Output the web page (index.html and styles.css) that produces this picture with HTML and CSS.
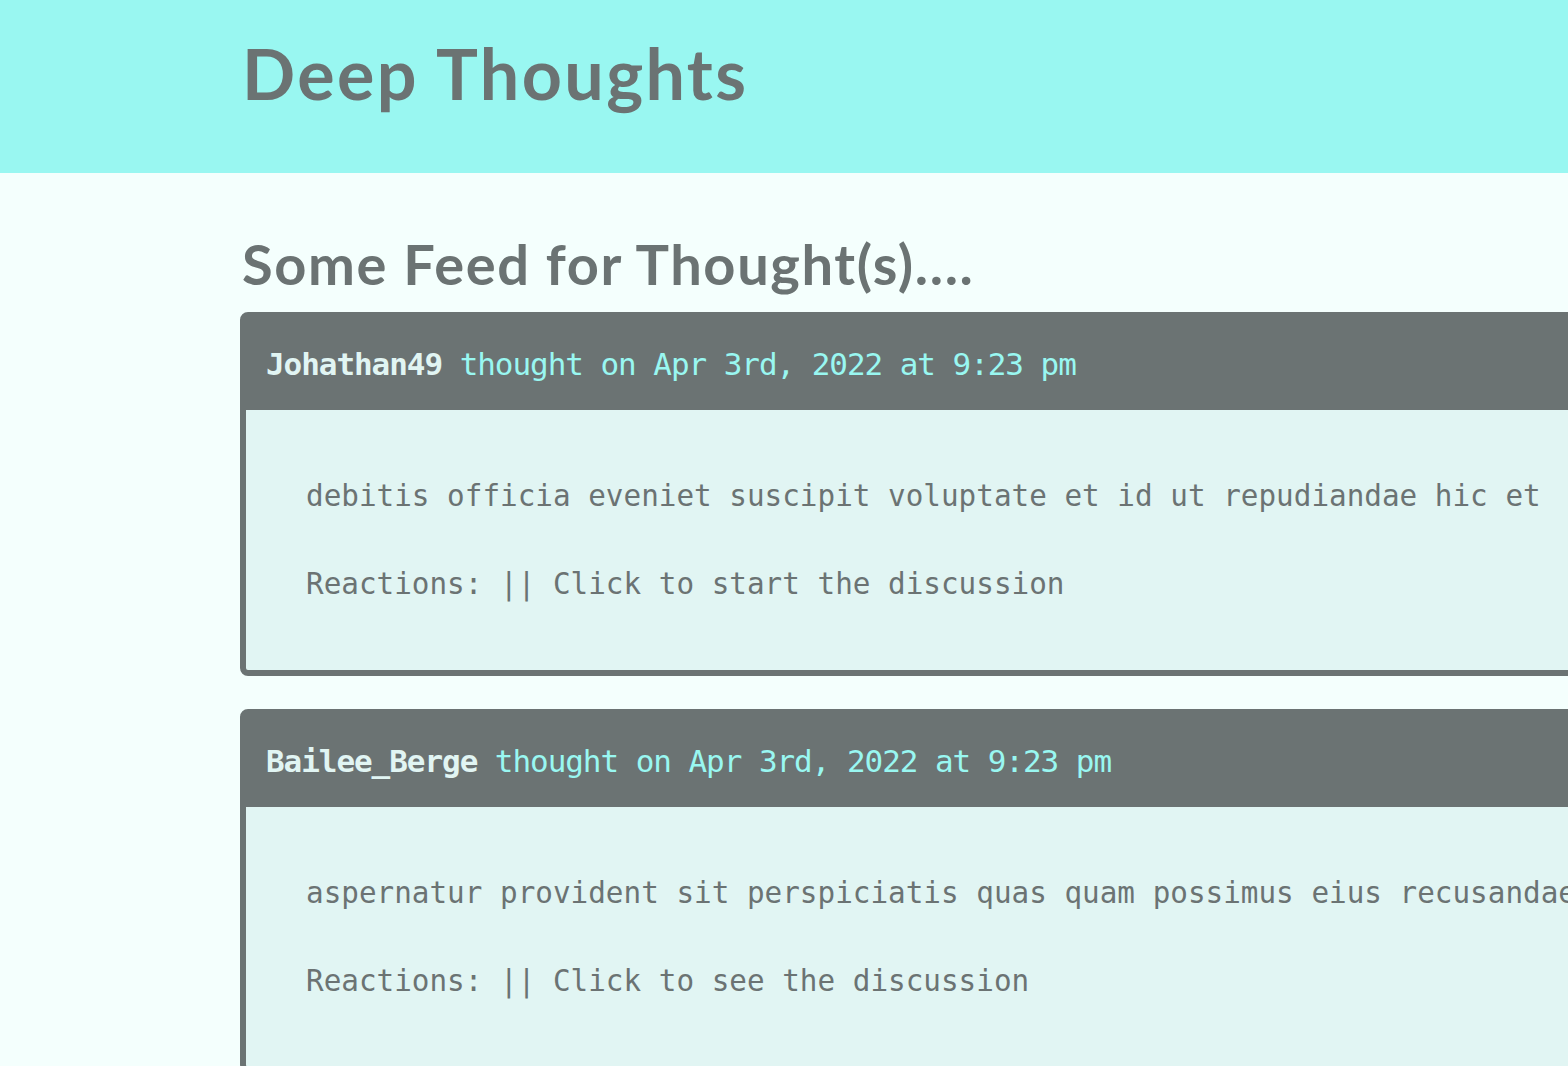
FILE: index.html
```html
<!DOCTYPE html>
<html lang="en">
<head>
<meta charset="utf-8">
<title>Deep Thoughts</title>
<link rel="stylesheet" href="styles.css">
</head>
<body>
<header class="site-header">
  <h1 class="site-title">Deep Thoughts</h1>
</header>
<main class="main">
  <h2 class="feed-title">Some Feed for Thought(s)....</h2>
  <div class="card">
    <div class="card-header"><span class="user">Johathan49</span> thought on Apr 3rd, 2022 at 9:23 pm</div>
    <div class="card-body">
      <p>debitis officia eveniet suscipit voluptate et id ut repudiandae hic et</p>
      <p>Reactions: || Click to start the discussion</p>
    </div>
  </div>
  <div class="card">
    <div class="card-header"><span class="user">Bailee_Berge</span> thought on Apr 3rd, 2022 at 9:23 pm</div>
    <div class="card-body">
      <p>aspernatur provident sit perspiciatis quas quam possimus eius recusandae</p>
      <p>Reactions: || Click to see the discussion</p>
    </div>
  </div>
</main>
</body>
</html>
```

FILE: styles.css
```css
html, body {
  margin: 0;
  padding: 0;
}
body {
  background: #f4fffd;
  overflow: hidden;
  color: #6b7373;
  font-family: "Lato", "Liberation Sans", sans-serif;
}
.site-header {
  background: #99f7f1;
  height: 173px;
  box-sizing: border-box;
  padding-left: 242px;
  display: flex;
  align-items: flex-start;
}
.site-title {
  margin: 0;
  padding-top: 33px;
  font-size: 70px;
  line-height: 80px;
  font-weight: 700;
  letter-spacing: 0.034em;
  color: #6b7373;
}
.main {
  padding-left: 240px;
  padding-top: 55px;
}
.feed-title {
  margin: 0 0 12px 2px;
  font-size: 56px;
  line-height: 72px;
  font-weight: 700;
  letter-spacing: 0.029em;
  color: #6b7373;
}
.card {
  width: 1500px;
  border: 6px solid #6b7373;
  border-radius: 8px;
  background: #e1f5f3;
  margin-bottom: 33px;
}
.card-header {
  background: #6b7373;
  height: 92px;
  display: flex;
  align-items: center;
  padding-left: 20px;
  font-family: "DejaVu Sans Mono", "Liberation Mono", monospace;
  font-size: 31px;
  letter-spacing: -1.06px;
  color: #99f7f1;
  white-space: pre;
}
.user {
  font-weight: 700;
  color: #e1f5f3;
}
.card-body {
  padding: 42px 0 42px 60px;
  font-family: "DejaVu Sans Mono", "Liberation Mono", monospace;
  font-size: 29.3px;
  color: #6b7373;
}
.card-body p {
  margin: 0;
  line-height: 88px;
  white-space: nowrap;
}
```
